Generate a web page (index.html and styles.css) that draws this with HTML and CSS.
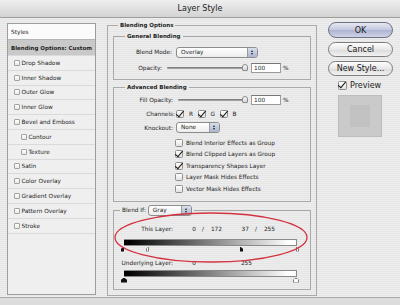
FILE: index.html
```html
<!DOCTYPE html>
<html lang="en">
<head>
    <meta charset="UTF-8">
    <meta name="viewport" content="width=device-width, initial-scale=1.0">
    <title>Layer Style</title>
    <link rel="stylesheet" href="styles.css">
</head>
<body>
    <div class="window">
        <div class="titlebar">Layer Style</div>

        <div class="dialog">
            <!-- style list -->
            <ul class="styles-list">
                <li class="list-head">Styles</li>
                <li class="selected">Blending Options: Custom</li>
                <li><span class="tick"></span>Drop Shadow</li>
                <li><span class="tick"></span>Inner Shadow</li>
                <li><span class="tick"></span>Outer Glow</li>
                <li><span class="tick"></span>Inner Glow</li>
                <li><span class="tick"></span>Bevel and Emboss</li>
                <li class="sub"><span class="tick"></span>Contour</li>
                <li class="sub"><span class="tick"></span>Texture</li>
                <li><span class="tick"></span>Satin</li>
                <li><span class="tick"></span>Color Overlay</li>
                <li><span class="tick"></span>Gradient Overlay</li>
                <li><span class="tick"></span>Pattern Overlay</li>
                <li><span class="tick"></span>Stroke</li>
            </ul>

            <!-- blending options -->
            <fieldset class="group outer">
                <legend>Blending Options</legend>

                <fieldset class="group inner general">
                    <legend>General Blending</legend>
                    <div class="row mode-row">
                        <label class="lbl">Blend Mode:</label>
                        <div class="popup mode">Overlay<span class="cap"></span></div>
                    </div>
                    <div class="row opacity-row">
                        <label class="lbl">Opacity:</label>
                        <div class="slider"><span class="knob"></span></div>
                        <div class="field">100</div>
                        <span class="unit">%</span>
                    </div>
                </fieldset>

                <fieldset class="group inner advanced">
                    <legend>Advanced Blending</legend>
                    <div class="row fill-row">
                        <label class="lbl">Fill Opacity:</label>
                        <div class="slider"><span class="knob"></span></div>
                        <div class="field">100</div>
                        <span class="unit">%</span>
                    </div>
                    <div class="row channels">
                        <label class="lbl">Channels:</label>
                        <span class="check on"></span><span class="chan">R</span>
                        <span class="check on"></span><span class="chan">G</span>
                        <span class="check on"></span><span class="chan">B</span>
                    </div>
                    <div class="row knock-row">
                        <label class="lbl">Knockout:</label>
                        <div class="popup knock">None<span class="cap"></span></div>
                    </div>
                    <div class="options">
                        <div class="opt"><span class="check"></span>Blend Interior Effects as Group</div>
                        <div class="opt"><span class="check on"></span>Blend Clipped Layers as Group</div>
                        <div class="opt"><span class="check on"></span>Transparency Shapes Layer</div>
                        <div class="opt"><span class="check"></span>Layer Mask Hides Effects</div>
                        <div class="opt"><span class="check"></span>Vector Mask Hides Effects</div>
                    </div>
                </fieldset>

                <fieldset class="group inner blendif">
                    <legend>Blend If: <div class="popup gray">Gray<span class="cap"></span></div></legend>
                    <div class="row vals">
                        <label class="lbl">This Layer:</label>
                        <span class="val w1">0</span><span class="sep">/</span><span class="val w2">172</span>
                        <span class="val w3">37</span><span class="sep">/</span><span class="val w2">255</span>
                    </div>
                    <div class="ramp"></div>
                    <div class="marks">
                        <span class="mark half-l black" style="left: 0%"></span>
                        <span class="mark half-l white" style="left: 14.51%"></span>
                        <span class="mark half-r black" style="left: 67.45%"></span>
                        <span class="mark half-r white" style="left: 100%"></span>
                    </div>
                    <div class="row vals under">
                        <label class="lbl">Underlying Layer:</label>
                        <span class="val w1">0</span><span class="val w4">255</span>
                    </div>
                    <div class="ramp"></div>
                    <div class="marks">
                        <span class="mark full black" style="left: 0%"></span>
                        <span class="mark full white" style="left: 100%"></span>
                    </div>
                </fieldset>
            </fieldset>

            <!-- buttons -->
            <div class="actions">
                <button class="btn default">OK</button>
                <button class="btn">Cancel</button>
                <button class="btn">New Style...</button>
                <div class="preview-row"><span class="check on big"></span>Preview</div>
                <div class="swatch"><div class="swatch-inner"></div></div>
            </div>
        </div>
    </div>

    <!-- red marker ring drawn over the screenshot -->
    <svg class="ring" width="400" height="305" viewBox="0 0 400 305">
        <ellipse cx="211" cy="237.5" rx="96" ry="24.5" fill="none" stroke="#d3313f" stroke-width="1.3"/>
    </svg>
</body>
</html>
```

FILE: styles.css
```css
* {
    margin: 0;
    padding: 0;
    box-sizing: border-box;
}

body {
    width: 400px;
    height: 305px;
    overflow: hidden;
    position: relative;
    font-family: "DejaVu Sans", "Liberation Sans", sans-serif;
    font-size: 5.8px;
    color: #1e1e1e;
    background: #dcdcdc;
}

.window {
    height: 298px;
    background: repeating-linear-gradient(#ededed 0 1px, #e6e6e6 1px 2px);
    border-bottom: 1px solid #a9a9a9;
}

.titlebar {
    height: 18px;
    line-height: 17px;
    text-align: center;
    font-size: 8px;
    color: #222;
    background: linear-gradient(#efefef, #d3d3d3);
    border-bottom: 1px solid #9c9c9c;
}

.dialog {
    display: flex;
    align-items: flex-start;
    padding: 3px 0 0 7px;
}

/* left list */
.styles-list {
    list-style: none;
    width: 89px;
    height: 272px;
    margin-top: 2px;
    background: #efefef;
    border: 1px solid #9d9d9d;
}

.styles-list li {
    height: 14.8px;
    display: flex;
    align-items: center;
    padding-left: 6px;
    border-bottom: 1px solid #dadada;
    white-space: nowrap;
}

.styles-list .list-head {
    height: 16px;
    padding-left: 3px;
    background: #fbfbfb;
    border-bottom: 1px solid #b4b4b4;
}

.styles-list .selected {
    height: 16px;
    padding-left: 3px;
    background: #c9c9c9;
    font-weight: bold;
    font-size: 5.5px;
}

.styles-list .sub {
    padding-left: 13px;
}

.tick {
    width: 6px;
    height: 6px;
    margin-right: 1.5px;
    border: 1px solid #a2a2a2;
    border-radius: 1px;
    background: linear-gradient(#ffffff, #e9e9e9);
}

/* group boxes */
.group {
    border: 1px solid #a9a9a9;
    min-width: 0;
}

.group legend {
    font-weight: bold;
    font-size: 5.5px;
    line-height: 8px;
    padding: 0 2px;
}

.outer {
    width: 210px;
    margin-left: 11px;
    padding: 0 0 5px;
}

.outer > legend {
    margin-left: 10px;
}

.inner {
    width: 198px;
    margin-left: 5px;
}

.inner > legend {
    margin-left: 11px;
}

.general {
    margin-top: 3px;
    padding: 5px 0 5px;
}

.advanced {
    margin-top: 3px;
    padding: 3px 0 6px;
}

.blendif {
    margin-top: 3px;
    padding: 9px 0 6px;
}

.blendif > legend {
    display: flex;
    align-items: center;
    height: 11px;
    margin-left: 6px;
    font-weight: normal;
    font-size: 5.8px;
}

/* form rows */
.row {
    display: flex;
    align-items: center;
}

.lbl {
    text-align: right;
    white-space: nowrap;
}

.mode-row {
    height: 14px;
}

.mode-row .lbl {
    width: 58px;
    margin-right: 4px;
}

.opacity-row {
    height: 12px;
    margin-top: 3px;
}

.opacity-row .lbl {
    width: 48px;
    margin-right: 5px;
}

.opacity-row .slider {
    width: 80px;
}

.fill-row {
    height: 12px;
}

.fill-row .lbl {
    width: 59px;
    margin-right: 5px;
}

.fill-row .slider {
    width: 69px;
}

.channels {
    height: 11px;
    margin-top: 2px;
}

.channels .lbl {
    width: 61px;
    margin-right: 1px;
}

.chan {
    margin: 0 4.5px 0 5px;
}

.knock-row {
    height: 13px;
    margin-top: 2px;
}

.knock-row .lbl {
    width: 59px;
    margin-right: 3px;
}

.options {
    margin-top: 3px;
    padding-left: 61px;
}

.opt {
    height: 11.5px;
    display: flex;
    align-items: center;
    white-space: nowrap;
}

.opt .check {
    margin-right: 3px;
}

/* controls */
.popup {
    position: relative;
    height: 11px;
    line-height: 9px;
    padding-left: 4px;
    border: 1px solid #8d8d8d;
    border-radius: 3px;
    background: linear-gradient(#ffffff, #ececec);
    font-weight: normal;
    font-size: 5.8px;
}

.popup .cap {
    position: absolute;
    right: 0;
    top: 0;
    bottom: 0;
    width: 10px;
    border-left: 1px solid #9a9a9a;
    border-radius: 0 2px 2px 0;
    background:
        linear-gradient(to top, transparent 6px, transparent 6px),
        linear-gradient(#d9dfec, #a9b6cf);
}

.popup .cap::before,
.popup .cap::after {
    content: "";
    position: absolute;
    left: 3px;
    border-left: 1.5px solid transparent;
    border-right: 1.5px solid transparent;
}

.popup .cap::before {
    top: 2px;
    border-bottom: 2px solid #222;
}

.popup .cap::after {
    bottom: 2px;
    border-top: 2px solid #222;
}

.mode {
    width: 82px;
}

.knock {
    width: 44px;
}

.gray {
    width: 44px;
    margin-left: 2px;
}

.slider {
    position: relative;
    height: 2px;
    margin-right: 4px;
    border-radius: 1px;
    background: linear-gradient(#6e6e6e, #b4b4b4);
}

.knob {
    position: absolute;
    right: -1px;
    top: -3px;
    width: 6px;
    height: 7px;
    border: 1px solid #8a8a8a;
    border-radius: 3px 3px 1px 1px;
    background: linear-gradient(#fafafa, #d4d4d4);
}

.field {
    width: 30px;
    height: 10px;
    line-height: 9px;
    padding-left: 2px;
    border: 1px solid #9c9c9c;
    border-top-color: #777;
    background: #fff;
}

.unit {
    margin-left: 2px;
}

.check {
    position: relative;
    flex: none;
    width: 8px;
    height: 8px;
    border: 1px solid #8e8e8e;
    border-radius: 1.5px;
    background: linear-gradient(#ffffff, #e2e2e2);
}

.check.on::after {
    content: "";
    position: absolute;
    left: 1px;
    top: -2px;
    width: 3px;
    height: 7px;
    border-right: 1.6px solid #111;
    border-bottom: 1.6px solid #111;
    transform: rotate(40deg);
}

/* blend if */
.vals {
    height: 8px;
}

.vals .lbl {
    width: 59px;
}

.val {
    text-align: right;
}

.w1 { width: 23px; }
.w2 { width: 12px; }
.w3 { width: 27px; }
.w4 { width: 56px; }

.sep {
    width: 14px;
    text-align: center;
}

.under {
    margin-top: 7px;
}

.ramp {
    width: 173px;
    height: 7px;
    margin: 6px 0 0 10px;
    background: linear-gradient(to right, #000 2%, #fff 96%);
    border: 1px solid #8a8a8a;
    border-left: none;
}

.under + .ramp {
    margin-top: 3px;
}

.marks {
    position: relative;
    width: 172px;
    height: 6px;
    margin-left: 10px;
}

.marks + .vals {
    margin-top: 7px;
}

.mark {
    position: absolute;
    top: 1px;
    height: 5px;
}

.full {
    width: 6px;
    margin-left: -3px;
    clip-path: polygon(50% 0, 100% 45%, 100% 100%, 0 100%, 0 45%);
}

.half-l {
    width: 3px;
    margin-left: -3px;
    clip-path: polygon(100% 0, 100% 100%, 0 100%, 0 45%);
}

.half-r {
    width: 3px;
    clip-path: polygon(0 0, 100% 45%, 100% 100%, 0 100%);
}

.mark.black {
    background: #111;
}

.mark.white {
    background: linear-gradient(#777, #777) no-repeat, #fafafa;
    background: #fafafa;
    box-shadow: inset 0 0 0 1px #7a7a7a;
}

/* right column */
.actions {
    width: 65px;
    margin-left: 11px;
    margin-top: 1px;
    display: flex;
    flex-direction: column;
}

.btn {
    height: 15px;
    margin-bottom: 4px;
    border: 1px solid #7d7d7d;
    border-radius: 8px;
    background: linear-gradient(#fdfdfd, #e8e8e8 50%, #dadada 51%, #f2f2f2);
    font-family: "DejaVu Sans", "Liberation Sans", sans-serif;
    font-size: 8px;
    color: #1a1a1a;
    line-height: 13px;
}

.btn.default {
    height: 16px;
    background: linear-gradient(#e6e8f3, #c3c7de 50%, #aeb3d2 51%, #cfd3e8);
    border-color: #6f7184;
}

.preview-row {
    display: flex;
    align-items: center;
    height: 12px;
    margin: -1px 0 0 10px;
    font-size: 8px;
}

.preview-row .check {
    width: 9px;
    height: 9px;
    margin-right: 3px;
}

.swatch {
    width: 44px;
    height: 42px;
    margin: 4px 0 0 10px;
    display: flex;
    align-items: center;
    justify-content: center;
    background: #cacaca;
    border: 1px solid #bdbdbd;
}

.swatch-inner {
    width: 20px;
    height: 22px;
    background: #c2c2c2;
}

.ring {
    position: absolute;
    left: 0;
    top: 0;
    pointer-events: none;
}
```
